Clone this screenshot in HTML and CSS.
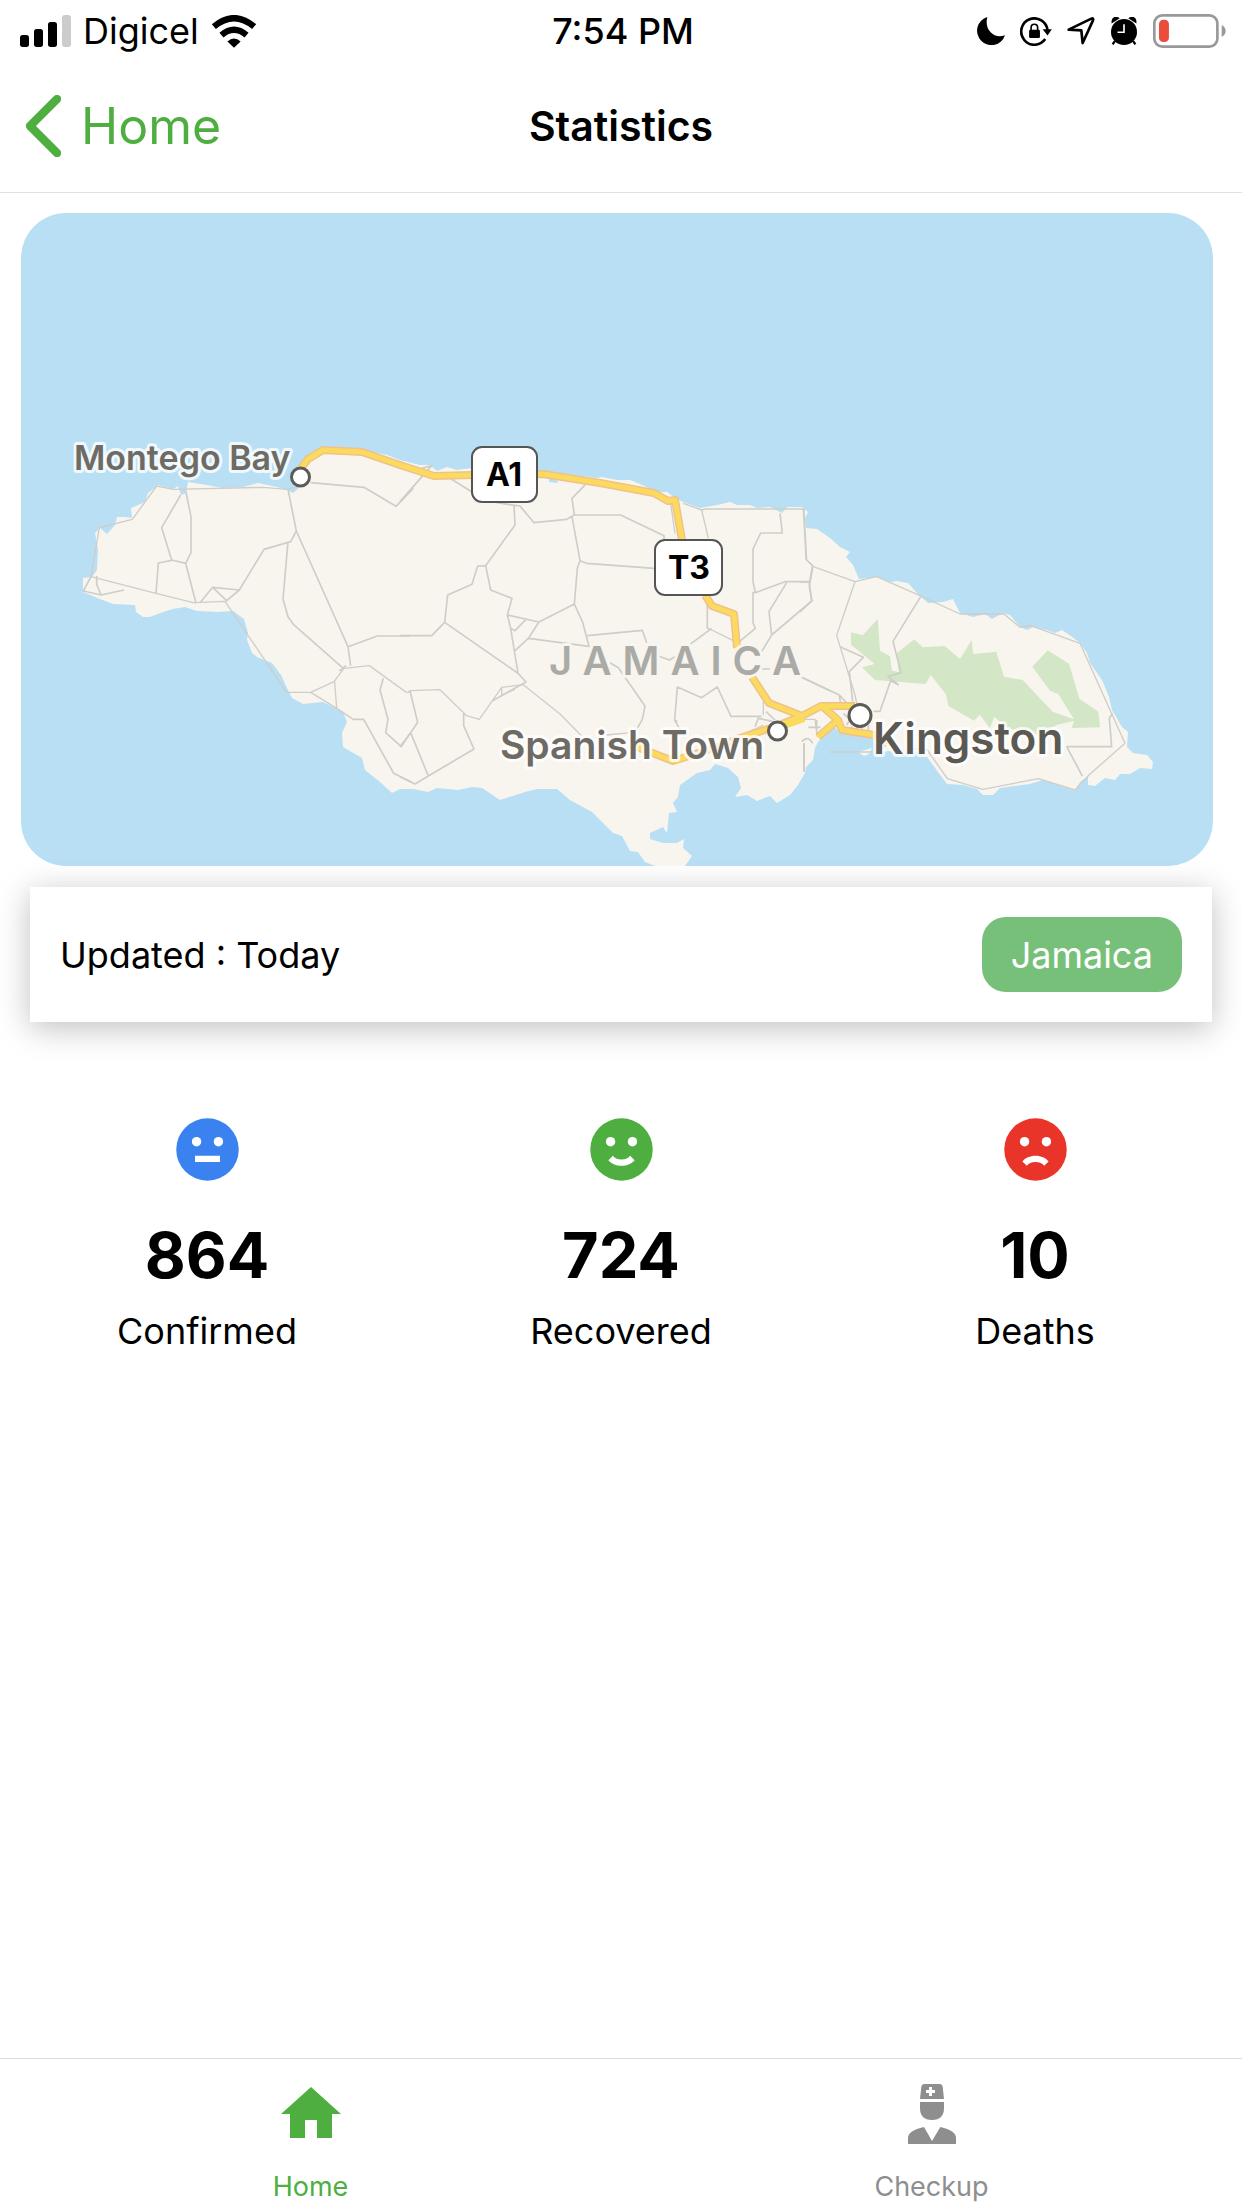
FILE: index.html
```html
<!DOCTYPE html>
<html lang="en">
<head>
<meta charset="utf-8">
<meta name="viewport" content="width=device-width, initial-scale=1">
<title>Statistics</title>
<link rel="stylesheet" href="styles.css">
</head>
<body>
<div class="app">
  <div class="status">
    <div class="status-left">
      <svg class="signal" viewBox="0 0 153 96" aria-hidden="true"><rect y="60" width="27" height="36" rx="8"/><rect x="42" y="42" width="27" height="54" rx="8"/><rect x="84" y="21" width="27" height="75" rx="8"/><rect class="off" x="126" width="27" height="96" rx="8"/></svg>
      <span>Digicel</span>
      <svg class="wifi" viewBox="0 0 138 100" aria-hidden="true"><path d="M8 35Q69-16 130 35" fill="none" stroke="#000" stroke-width="19"/><path d="M31 61Q69 29 107 61" fill="none" stroke="#000" stroke-width="19"/><path d="M49 80Q69 62 89 80L69 99Z"/></svg>
    </div>
    <span class="time">7:54 PM</span>
    <div class="status-right">
      <svg class="moon" viewBox="0 0 84 84" aria-hidden="true"><path d="M31 0A43 43 0 1 0 84 55Q58 64 41 46Q24 29 31 0Z"/></svg>
      <svg class="lock" viewBox="0 0 96 88" aria-hidden="true"><path d="M83 41A40 40 0 1 0 76 67" fill="none" stroke="#000" stroke-width="8"/><path d="M68 37H96L83 56Z"/><rect x="27" y="39" width="33" height="25" rx="4"/><path d="M33 42V33Q33 22 43 22T53 33V42" fill="none" stroke="#000" stroke-width="5"/></svg>
      <svg class="locate" viewBox="0 0 84 84" aria-hidden="true"><path d="M5 38L73 5Q80 2 78 10L47 78L43 40Z" fill="none" stroke="#000" stroke-width="8" stroke-linejoin="round"/></svg>
      <svg class="alarm" viewBox="0 0 84 86" aria-hidden="true"><circle cx="42" cy="46" r="40"/><path d="M4 20Q2 4 13 0Q22-2 29 4ZM80 20Q82 4 71 0Q62-2 55 4Z"/><path d="M14 74L7 84M70 74L77 84" stroke="#000" stroke-width="7"/><path d="M42 22V47H22" fill="none" stroke="#fff" stroke-width="5"/></svg>
      <svg class="battery" viewBox="0 0 220 102" aria-hidden="true"><rect x="4" y="4" width="190" height="94" rx="24" fill="none" stroke="#999" stroke-width="8"/><rect x="18" y="17" width="30" height="67" rx="13" fill="#eb4d3d"/><path d="M207 33Q219 40 219 51T207 69Z" fill="#999"/></svg>
    </div>
  </div>

  <header class="header">
    <a class="back" href="#home">
      <svg viewBox="0 0 108 186" aria-hidden="true"><path d="M96 12L15 93L96 174" fill="none" stroke="currentColor" stroke-width="25" stroke-linecap="round" stroke-linejoin="round"/></svg>
      <span>Home</span>
    </a>
    <h1 class="title">Statistics</h1>
  </header>

  <main class="content">
    <svg class="map" viewBox="21 213 1192 653" role="img" aria-label="Map of Jamaica">
      <path class="land" d="M158 485L173 489L178 486L181 495L186 493L188 482L207 485L223 488L243 487L258 483L277 487L287 490L293 493L300 487V465L313 455L323 448L363 450L387 455L400 460L420 465L430 465L437 471L447 467L457 470L472 468L543 471L597 478L602 477L617 480L630 480L640 484L657 492L667 492L675 498L683 502L700 508L717 505L730 502L737 505L750 505L757 508L770 507L782 513L787 507L802 507L808 512L805 518L806 528L817 529L830 538L840 547L850 552L846 557L853 565L859 579L877 577L890 582L897 581L908 583L917 593L928 603L943 602L953 599L960 613L973 617L985 614L992 619L1003 613L1010 615L1020 627L1027 630L1033 627L1047 630L1055 633L1062 630L1071 636L1080 643L1087 653L1090 663L1102 680L1109 697L1112 710L1122 727L1128 732L1127 747L1133 753L1147 755L1153 762L1152 769L1140 768L1130 774L1120 774L1115 780L1105 778L1095 786L1088 785V776L1080 782L1075 791L1060 786L1043 780L1030 784L1000 788L993 795L983 795L977 789L963 785L947 784L938 772L927 757L910 749L880 752L872 738L840 733L833 725L818 742L815 748L813 760L806 767L805 773L798 785L790 795L777 803L770 796L757 801L747 795L735 797L741 788L738 777L728 768L715 764L710 770L697 773L680 785L678 797L673 803L677 812L669 813L667 833L663 827L650 833V839L663 843L677 843L684 839L683 848L692 856L685 866H655L645 862L638 852L630 851L622 836L613 833L592 812L570 800L557 789L537 789L525 792L500 800L482 788L472 787L458 790L437 788L428 792L413 789L400 789L392 793L380 782L365 770L362 758L343 747L342 733L347 722L343 712L323 702L303 704L292 698L287 688L281 675L272 663L257 657L252 653L247 640L248 633L244 619L233 611L218 612L197 611L185 607L173 609L160 613L150 617L143 617L136 612L135 605L113 604L100 599L83 592V578L92 577L97 570L98 550L95 533L100 528L107 534L115 525L117 517L125 517L132 518L131 508L145 502L148 493Z"/>
      <path class="land" d="M858 752L872 748L869 754L864 756Z"/>
      <path class="water" d="M549 478L557 479L558 483L549 482Z"/>
      <g transform="translate(800 480) scale(.33333)">
        <path class="park" d="M153 457L188 466L233 417L240 512L270 529L276 572L296 576L290 520L343 478L368 502L434 498L480 537L515 480L520 522L589 515L612 590L668 600L758 695L822 718L775 642L750 632L697 560L743 511L807 551L838 656L895 695L900 742L815 744L822 722L770 735L720 765L620 745L583 710L570 745L540 704L522 722L445 678L438 643L392 585L377 612L225 600L186 562L224 552L153 494Z"/>
        <path class="road" d="M362 350L279 484L303 578L264 590L295 614L272 602L240 694H220M120 500L190 532L148 575L158 665M5 592L118 645L150 680M118 645L122 670M90 816H215M800 800H935L928 715L938 700M800 800L847 888M38 262L28 320L36 362L0 396M0 306H28M12 790V875"/>
        <path class="road fine" d="M10 88L18 238L40 260L165 305L230 290L360 347L480 402H612L660 442L690 436L840 490L975 790L870 882L825 930L715 896L548 928L442 896L382 810L330 805M165 305L110 466L165 645L172 680M0 718H45L52 770"/>
        <path class="road" d="M25 742H62M5 785Q25 765 38 790M50 720V750M205 735V770M155 740V770M170 740V770M185 740V770M130 700L150 720M140 735L160 700"/>
      </g>
      <g transform="translate(10 400) scale(.33333)">
        <path class="road" d="M512 285L455 383L485 480L527 490L543 458V350L527 272M438 580L445 489L485 481M527 490L558 610M570 608L608 562L688 570L650 602L608 562M688 570L762 448L842 425L859 393L834 268M834 425L819 597L834 650L850 673L1000 805M859 393L1014 740L1022 797M1014 740L1102 708H1200M902 248L1062 262L1158 319L1210 265M342 570L273 585L220 573L243 530M260 528V552L273 585M1120 835L1110 870L1134 958L1127 998L1174 1040L1200 1000M980 925L1030 958H1061L1151 1120L1205 1147M988 813L1008 797"/>
        <path class="road fine" d="M243 530L268 383L367 358L440 258L490 268L760 262L830 268L870 258M243 530L438 580L550 608L645 604L830 877H902L972 845L1002 805L1078 797L1190 878M902 877L980 925L974 845"/>
      </g>
      <g transform="translate(400 400) scale(.33333)">
        <path class="road" d="M0 305L95 197L65 205M150 235L215 275M290 308L360 318L402 368L500 358L523 345H662L792 407V420M556 254L516 295L523 345M342 315L345 375L257 497L233 498L216 553L143 585L134 667L95 707H0M257 497L272 570L336 595L322 645L332 685L354 820L378 846L278 902M134 667L354 820M322 645L417 666L523 612L532 505L540 482L516 350M540 482L560 490L762 505M332 685L345 692L378 658M345 752L385 715L417 666M385 715L567 739L548 667L523 612M562 707L727 691L740 728M775 768L808 780L830 768M870 733L935 685M922 590V685L935 690M1140 340L1147 399H1082L1059 447V545L1066 578L1155 545H1230M1066 578H1059V668L1066 685L1018 725M1160 548L1107 635L1115 705L1235 603L1228 550L1237 500M1115 705L1085 755M630 788L655 803L735 918L727 958L710 988M832 965L824 960L832 861L905 893L952 861L993 949H1085M1085 807H1110M1205 832L1290 872M0 1040L32 998L53 967L30 873L22 878M32 998L85 1128L222 1047L191 977V940M0 1130L45 1152L85 1128M1065 980L1075 955L1120 965M1212 1030V1115M824 960L845 998M1098 935L1125 960"/>
        <path class="road fine" d="M30 872L120 869L200 947L238 958L305 862L370 854L480 942L545 1008M305 862V885L345 868M812 310L825 400M850 310L905 330L925 415M905 330L915 327H1213M935 690L1000 722M1212 327L1220 480L1240 498M1090 905V945M1020 1008L1090 975M620 1005L692 998V1030"/>
      </g>
      <g fill="none" stroke-linejoin="round">
        <path class="trunk-edge" d="M301 468L308 459L323 450L362 452L400 465L434 476L472 475L543 474L600 483L654 493L668 501L675 500L682 540M705 595L712 606L734 614L737 648M752 677L769 703L802 716L821 706H855M802 716L777 726L740 738L720 746L692 755L673 761L632 745M822 706L838 720L818 737M838 720L842 730L874 735L886 746"/>
        <path class="trunk" d="M301 468L308 459L323 450L362 452L400 465L434 476L472 475L543 474L600 483L654 493L668 501L675 500L682 540M705 595L712 606L734 614L737 648M752 677L769 703L802 716L821 706H855M802 716L777 726L740 738M692 755L673 761L632 745M822 706L838 720L818 737M838 720L842 730L874 735"/>
        <path class="trunk wide" d="M784 725L804 718"/>
      </g>
      <g class="shield"><rect x="472" y="447" width="65" height="55" rx="10"/><text x="504" y="486">A1</text><rect x="655" y="540" width="67" height="55" rx="10"/><text x="689" y="579">T3</text></g>
      <text class="place small" x="74" y="470">Montego Bay</text>
      <text class="place" x="500" y="759">Spanish Town</text>
      <text class="place capital" x="873" y="754">Kingston</text>
      <text class="place country" x="549" y="675">JAMAICA</text>
      <g class="town"><circle cx="300.500" cy="477" r="9"/><circle cx="777.500" cy="731" r="9"/><circle cx="860" cy="715.500" r="11"/></g>
    </svg>

    <section class="card">
      <span>Updated : Today</span>
      <button class="chip" type="button">Jamaica</button>
    </section>

    <section class="stats">
      <div class="stat">
        <svg class="face" viewBox="0 0 24 24" aria-hidden="true"><circle cx="12" cy="12" r="10" fill="#3b82f1"/><g fill="#fff"><circle cx="8.500" cy="9.500" r="1.500"/><circle cx="15.500" cy="9.500" r="1.500"/><path d="M8 14H16V16H8Z"/></g></svg>
        <strong>864</strong><span>Confirmed</span>
      </div>
      <div class="stat">
        <svg class="face" viewBox="0 0 24 24" aria-hidden="true"><circle cx="12" cy="12" r="10" fill="#4eae3f"/><g fill="#fff"><circle cx="8.500" cy="9.500" r="1.500"/><circle cx="15.500" cy="9.500" r="1.500"/><path d="M12 17.230C10.250 17.230 8.710 16.500 7.810 15.420L9.230 14C9.680 14.720 10.750 15.230 12 15.230C13.250 15.230 14.320 14.720 14.770 14L16.190 15.420C15.290 16.500 13.750 17.230 12 17.230Z"/></g></svg>
        <strong>724</strong><span>Recovered</span>
      </div>
      <div class="stat">
        <svg class="face" viewBox="0 0 24 24" aria-hidden="true"><circle cx="12" cy="12" r="10" fill="#e93529"/><g fill="#fff"><circle cx="8.500" cy="9.500" r="1.500"/><circle cx="15.500" cy="9.500" r="1.500"/><path d="M12 14C13.750 14 15.290 14.720 16.190 15.810L14.770 17.230C14.320 16.500 13.250 16 12 16C10.750 16 9.680 16.500 9.230 17.230L7.810 15.810C8.710 14.720 10.250 14 12 14Z"/></g></svg>
        <strong>10</strong><span>Deaths</span>
      </div>
    </section>
  </main>

  <nav class="tabs">
    <a class="tab active" href="#home">
      <svg viewBox="0 0 24 24" aria-hidden="true"><path fill="currentColor" d="M10 20V14H14V20H19V12H22L12 3L2 12H5V20Z"/></svg>
      <span>Home</span>
    </a>
    <a class="tab" href="#checkup">
      <svg viewBox="0 0 216 216" aria-hidden="true"><path fill="currentColor" fill-rule="evenodd" d="M84 18H132Q139 18 140 26L144 63H72L76 26Q77 18 84 18ZM99 27V36H90V45H99V54H108V45H117V36H108V27ZM72 72H144V90Q144 126 108 126T72 90ZM84 147L108 189L133 147Q180 158 180 180V198H36V180Q36 158 84 147Z"/></svg>
      <span>Checkup</span>
    </a>
  </nav>
</div>
</body>
</html>
```
FILE: styles.css
```css
* {
  box-sizing: border-box;
}

body {
  margin: 0;
  background: #fff;
  color: #000;
  font-family: Inter, "Liberation Sans", sans-serif;
  font-size: 36px;
  line-height: 44px;
}

a {
  color: inherit;
  text-decoration: none;
}

svg {
  display: block;
  flex: none;
}

.app {
  display: flex;
  flex-direction: column;
  min-height: 100vh;
}

/* Status bar */
.status {
  display: grid;
  grid-template-columns: 1fr auto 1fr;
  align-items: center;
  height: 60px;
  padding: 2px 16px 0 20px;
}

.status-left,
.status-right {
  display: flex;
  align-items: center;
}

.status-left {
  gap: 12px;
}

.status-right {
  justify-content: flex-end;
  gap: 15px;
}

.signal {
  width: 51px;
  height: 32px;
}

.signal .off {
  fill: #ccc;
}

.wifi {
  width: 46px;
  height: 33px;
}

.time {
  font-weight: 500;
}

.moon,
.locate,
.alarm {
  width: 28px;
  height: 28px;
}

.lock {
  width: 32px;
  height: 29px;
}

.battery {
  width: 73px;
  height: 34px;
}

/* Header */
.header {
  display: grid;
  grid-template-columns: 1fr auto 1fr;
  align-items: center;
  height: 133px;
  padding: 0 25px;
  border-bottom: 1px solid #e0e0e0;
}

.back {
  display: flex;
  align-items: center;
  gap: 20px;
  color: #4eae3f;
  font-size: 50px;
}

.back svg {
  width: 36px;
  height: 62px;
}

.title {
  margin: 0;
  font-size: 41px;
  font-weight: 600;
}

/* Map */
.content {
  flex: 1;
}

.map {
  width: calc(100% - 50px);
  height: auto;
  margin: 20px 29px 0 21px;
  border-radius: 45px;
  background: #b8dff4;
}

.land {
  fill: #f8f5ee;
}

.water {
  fill: #b8dff4;
}

.park {
  fill: #d3e6c6;
}

.road {
  fill: none;
  stroke: #cfcdc8;
  stroke-width: 5px;
  stroke-linejoin: round;
}

.road.fine {
  stroke-width: 4px;
}

.trunk-edge {
  stroke: #f1c08b;
  stroke-width: 8px;
}

.trunk {
  stroke: #fadb5e;
  stroke-width: 5px;
}

.trunk.wide {
  stroke-width: 8px;
}

.shield rect {
  fill: #fff;
  stroke: #555;
  stroke-width: 2px;
}

.shield text {
  font-size: 32px;
  font-weight: 700;
  text-anchor: middle;
}

.town circle {
  fill: #fff;
  stroke: #5c5b56;
  stroke-width: 3px;
}

.place {
  fill: #6e6b65;
  stroke: #fffc;
  stroke-width: 6px;
  stroke-linejoin: round;
  paint-order: stroke;
  font-size: 39px;
  font-weight: 600;
}

.place.small {
  font-size: 34px;
}

.place.capital {
  fill: #5a5953;
  font-size: 44px;
}

.place.country {
  fill: #aaaba7;
  stroke: #f8f5ee;
  font-size: 40px;
  letter-spacing: 11px;
}

/* Update card */
.card {
  display: flex;
  justify-content: space-between;
  align-items: center;
  margin: 21px 30px 0;
  padding: 30px;
  background: #fff;
  box-shadow: 0 6px 30px rgba(0, 0, 0, 0.25);
}

.chip {
  height: 75px;
  padding: 0 29px;
  border: 0;
  border-radius: 24px;
  background: #77c079;
  color: #fff;
  font: inherit;
}

/* Totals */
.stats {
  display: grid;
  grid-template-columns: repeat(3, 1fr);
  margin-top: 90px;
}

.stat {
  display: flex;
  flex-direction: column;
  align-items: center;
}

.face {
  width: 75px;
  height: 75px;
}

.stat strong {
  margin: 30px 0 16px;
  font-size: 63px;
  font-weight: 700;
  line-height: 76px;
}

/* Tab bar */
.tabs {
  display: grid;
  grid-template-columns: 1fr 1fr;
  border-top: 1px solid #dcdcdc;
}

.tab {
  display: flex;
  flex-direction: column;
  align-items: center;
  gap: 20px;
  padding: 19px 0 5px;
  color: #8e8e8e;
  font-size: 27px;
  line-height: 33px;
}

.tab.active {
  color: #4eae3f;
}

.tab svg {
  width: 72px;
  height: 72px;
}
```
